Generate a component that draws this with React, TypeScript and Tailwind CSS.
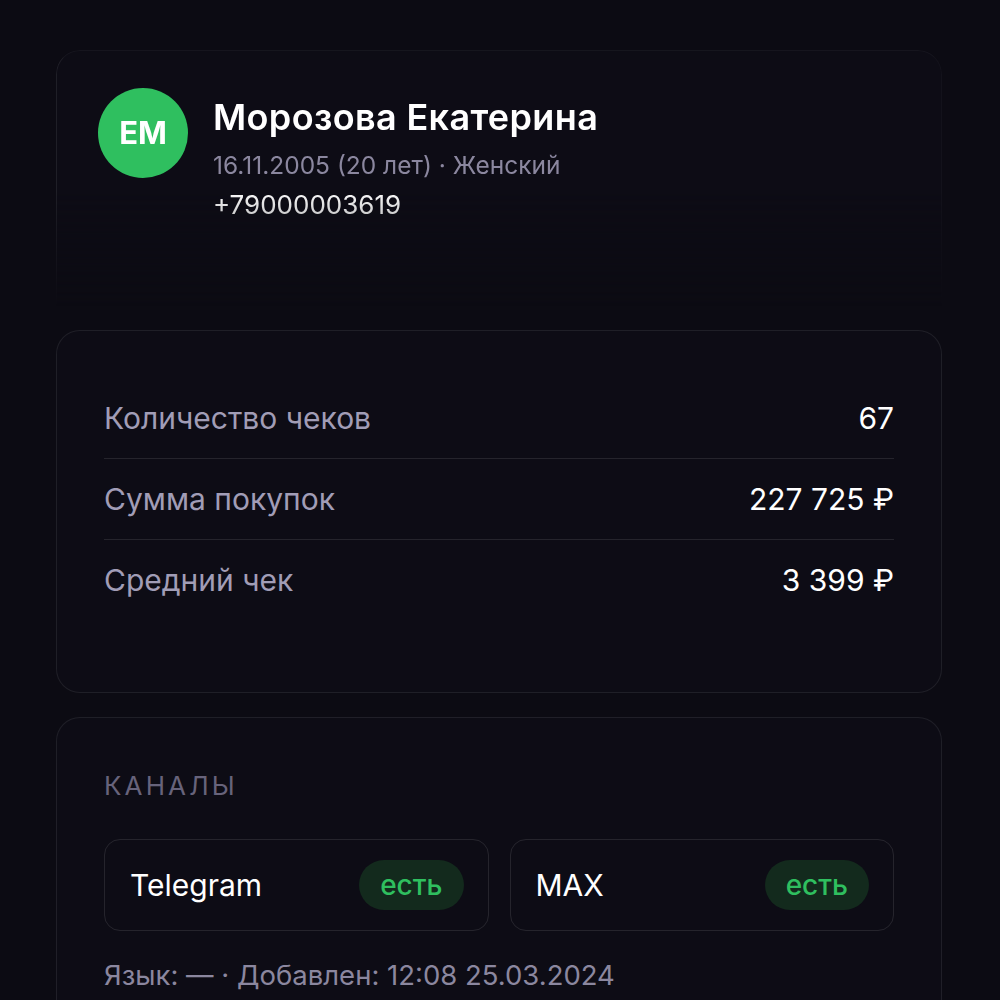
import React from 'react'

const stats = [
  { label: 'Количество чеков', value: '67' },
  { label: 'Сумма покупок', value: '227 725 ₽' },
  { label: 'Средний чек', value: '3 399 ₽' },
]

const channels = [
  { name: 'Telegram', status: 'есть' },
  { name: 'MAX', status: 'есть' },
]

export default function App() {
  return (
    <main className="min-h-screen bg-[#0c0b13] text-white font-['Inter',sans-serif] overflow-hidden h-[1000px]">
      <div className="w-[886px] ml-[56px] pt-[50px] flex flex-col gap-[24px]">

        {/* Profile */}
        <section className="h-[256px] rounded-t-[24px] border-t border-x border-t-white/[0.04] border-l-white/[0.08] border-r-white/[0.03] bg-[#0d0c15] px-[41px] pt-[37px] [mask-image:linear-gradient(to_bottom,black_55%,transparent)]">
          <div className="flex items-start gap-[25px]">
            <div className="w-[90px] h-[90px] rounded-full bg-[#2fbf5f] flex items-center justify-center text-[31px] font-bold text-white shrink-0">
              EM
            </div>
            <div className="flex flex-col pt-[7px]">
              <h1 className="text-[36px] font-semibold leading-[44px] text-white tracking-[0.01em]">Морозова Екатерина</h1>
              <span className="mt-[8px] text-[24.5px] leading-[36px] text-[#8b879f]">16.11.2005 (20 лет) · Женский</span>
              <span className="mt-[4px] text-[26px] leading-[36px] text-white">+79000003619</span>
            </div>
          </div>
        </section>

        {/* Stats */}
        <section className="h-[363px] rounded-[24px] border border-white/[0.08] bg-[#0d0c15] px-[47px] pt-[47px]">
          {stats.map((s, i) => (
            <div
              key={s.label}
              className={`flex items-center justify-between h-[81px] ${i < stats.length - 1 ? 'border-b border-white/[0.10]' : ''}`}
            >
              <span className="text-[30px] text-[#a19db6]">{s.label}</span>
              <span className="text-[30px] text-white">{s.value}</span>
            </div>
          ))}
        </section>

        {/* Channels */}
        <section className="rounded-t-[24px] border-t border-x border-white/[0.08] bg-[#0d0c15] px-[47px] pt-[51px] pb-[40px]">
          <h2 className="text-[26px] tracking-[0.12em] uppercase text-[#67637b] leading-[34px]">Каналы</h2>
          <div className="grid grid-cols-2 gap-[21px] mt-[36px]">
            {channels.map(c => (
              <div key={c.name} className="h-[92px] rounded-[16px] border border-white/[0.10] flex items-center justify-between pl-[25px] pr-[24px]">
                <span className="text-[30px] text-white">{c.name}</span>
                <span className="h-[50px] px-[21px] rounded-full bg-[#132a1d] text-[#2fbf5f] text-[28px] font-medium flex items-center">
                  {c.status}
                </span>
              </div>
            ))}
          </div>
          <p className="mt-[26px] text-[27.5px] leading-[36px] text-[#8b879f]">Язык: — · Добавлен: 12:08 25.03.2024</p>
        </section>
      </div>
    </main>
  )
}
